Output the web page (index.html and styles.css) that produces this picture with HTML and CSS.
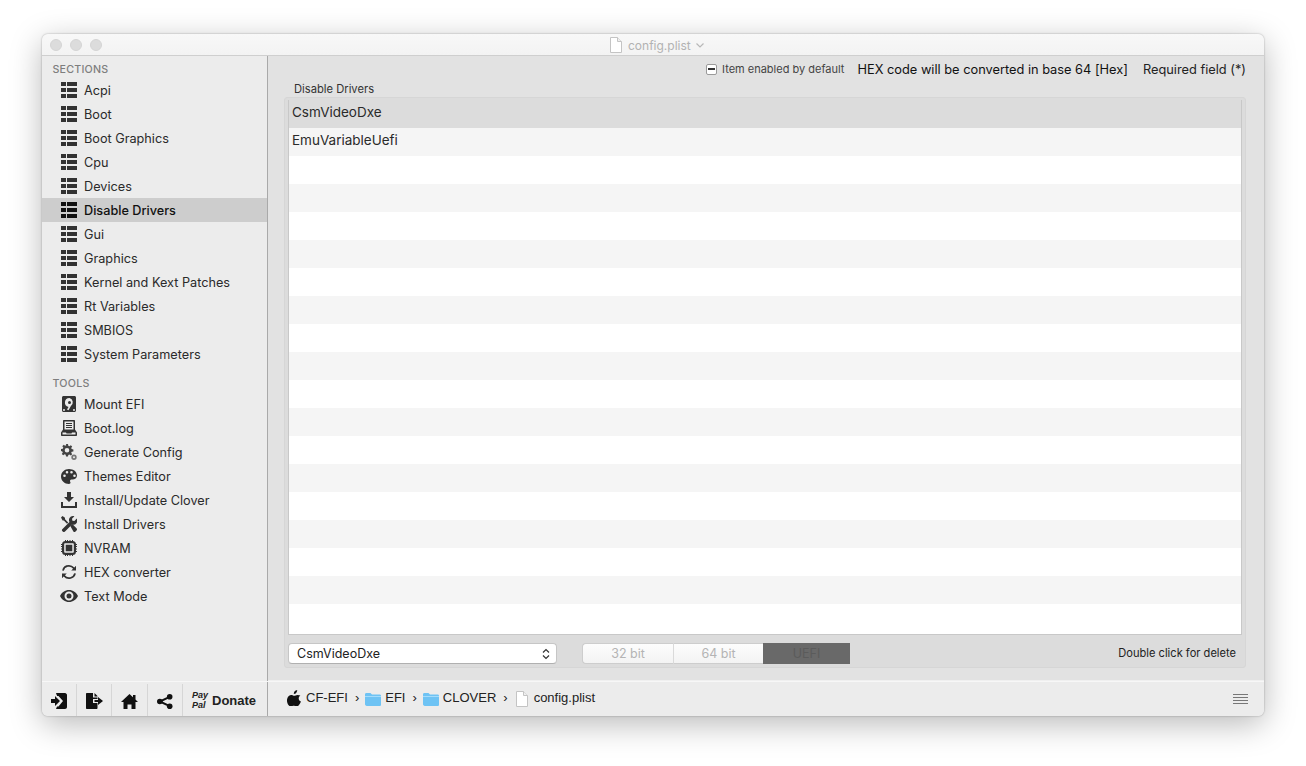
FILE: index.html
```html
<!DOCTYPE html>
<html lang="en">
<head>
<meta charset="utf-8">
<title>config.plist</title>
<link rel="stylesheet" href="styles.css">
</head>
<body>
<svg class="defs" width="0" height="0">
  <symbol id="list" viewBox="0 0 16 16">
    <path d="M0 0h5v4H0zM6 0h10v4H6zM0 6h5v4H0zM6 6h10v4H6zM0 12h5v4H0zM6 12h10v4H6z"/>
  </symbol>
  <symbol id="doc" viewBox="0 0 12 16">
    <path d="M.5.5h7l4 4v11H.5z" fill="#fff" stroke="#c4c4c4"/><path d="M7.5.5v4h4" fill="#f0f0f0" stroke="#c4c4c4"/>
  </symbol>
  <symbol id="folder" viewBox="0 0 16 14">
    <path d="M0 2.5C0 1.5.5 1 1.500 1h4l1.500 1.500h7.500c1 0 1.500.5 1.500 1.500v8.500c0 1-.5 1.500-1.500 1.500h-13C.5 13.500 0 13 0 12z" fill="#6ec3f4"/><path d="M0 4h16v1H0z" fill="#a5dcfb"/>
  </symbol>
</svg>
<div class="window">
  <header class="titlebar">
    <div class="lights"><span class="light"></span><span class="light"></span><span class="light"></span></div>
    <div class="title">
      <svg class="title-doc" width="12" height="16"><use href="#doc"/></svg>
      <span>config.plist</span>
      <svg class="title-chev" width="8" height="5" viewBox="0 0 8 5"><path d="M.5.5 4 4 7.500.5" fill="none" stroke="#b8b8b8" stroke-width="1.200"/></svg>
    </div>
  </header>
  <div class="content">
    <aside class="sidebar">
      <div class="sec-head">SECTIONS</div>
      <div class="item"><svg class="ic"><use href="#list"/></svg>Acpi</div>
      <div class="item"><svg class="ic"><use href="#list"/></svg>Boot</div>
      <div class="item"><svg class="ic"><use href="#list"/></svg>Boot Graphics</div>
      <div class="item"><svg class="ic"><use href="#list"/></svg>Cpu</div>
      <div class="item"><svg class="ic"><use href="#list"/></svg>Devices</div>
      <div class="item selected"><svg class="ic"><use href="#list"/></svg>Disable Drivers</div>
      <div class="item"><svg class="ic"><use href="#list"/></svg>Gui</div>
      <div class="item"><svg class="ic"><use href="#list"/></svg>Graphics</div>
      <div class="item"><svg class="ic"><use href="#list"/></svg>Kernel and Kext Patches</div>
      <div class="item"><svg class="ic"><use href="#list"/></svg>Rt Variables</div>
      <div class="item"><svg class="ic"><use href="#list"/></svg>SMBIOS</div>
      <div class="item"><svg class="ic"><use href="#list"/></svg>System Parameters</div>
      <div class="sec-head tools">TOOLS</div>
      <div class="item"><svg class="ic" viewBox="0 0 16 16"><path fill-rule="evenodd" d="M2.500 0h11c.8 0 1.500.7 1.500 1.500v13c0 .8-.7 1.500-1.500 1.500h-11C1.700 16 1 15.300 1 14.500v-13C1 .7 1.700 0 2.500 0zM8.500 2a4.500 4.500 0 0 0-1 8.900L6 13.500l1.500.8 2.400-4.300A4.500 4.500 0 0 0 8.500 2zm0 3a1.500 1.500 0 1 1 0 3 1.500 1.500 0 0 1 0-3zM3 13a1 1 0 1 0 0 2 1 1 0 0 0 0-2zm10 0a1 1 0 1 0 0 2 1 1 0 0 0 0-2z"/></svg>Mount EFI</div>
      <div class="item"><svg class="ic" viewBox="0 0 16 16"><path fill-rule="evenodd" d="M3 0h10c.6 0 1 .4 1 1v8.500l2 3V15c0 .6-.4 1-1 1H1c-.6 0-1-.4-1-1v-2.500l2-3V1c0-.6.4-1 1-1zm.5 1.500v8h9v-8zM5 3h6v1H5zm0 2h6v1H5zm0 2h6v1H5zM1.500 12.500v2h13v-2H11l-.5 1h-5l-.5-1z"/></svg>Boot.log</div>
      <div class="item"><svg class="ic gear" viewBox="0 0 16 16"><path fill-rule="evenodd" d="M5 0h2l.3 1.700 1.100.5L9.800 1.200l1.400 1.400-1 1.400.5 1.100 1.700.3v2l-1.700.3-.5 1.100 1 1.400-1.400 1.400-1.400-1-1.100.5L7 12.500H5l-.3-1.700-1.100-.5-1.400 1-1.400-1.400 1-1.400-.5-1.100L0 7V5l1.800-.3.5-1.100-1-1.400 1.400-1.400 1.400 1 1.100-.5zM6 4a2.300 2.300 0 1 0 0 4.600A2.300 2.300 0 0 0 6 4z"/><path fill-rule="evenodd" d="M13 10.500a2.700 2.700 0 1 1 0 5.400 2.700 2.700 0 0 1 0-5.400zm0 1.700a1 1 0 1 0 0 2 1 1 0 0 0 0-2z" fill="#777"/></svg>Generate Config</div>
      <div class="item"><svg class="ic" viewBox="0 0 16 16"><path fill-rule="evenodd" d="M8 1c4.500 0 8 2.800 8 6.500 0 2.700-2.200 4-4.500 4-1.500 0-2.500.4-2.500 1.500 0 .9.500 1.100.5 1.800 0 .7-.6 1.200-1.500 1.200C3.500 16 0 12.600 0 8.500 0 4.400 3.500 1 8 1zM3.500 6.500a1.300 1.300 0 1 0 0 2.600 1.300 1.300 0 0 0 0-2.600zM6 3a1.300 1.300 0 1 0 0 2.600A1.300 1.300 0 0 0 6 3zm4.500 0a1.300 1.300 0 1 0 0 2.600 1.300 1.300 0 0 0 0-2.600zm3 3.500a1.300 1.300 0 1 0 0 2.600 1.300 1.300 0 0 0 0-2.600z"/></svg>Themes Editor</div>
      <div class="item"><svg class="ic" viewBox="0 0 16 16"><path d="M6 0h4v5h3L8 10 3 5h3z"/><path d="M0 10h2v4h12v-4h2v6H0z"/></svg>Install/Update Clover</div>
      <div class="item"><svg class="ic" viewBox="0 0 16 16"><path d="M1.500 0 4 1.800v1.400l3.200 3.200L6 7.700 2.900 4.500H1.600L0 1.500zM12 0a3.800 3.800 0 0 1 1.400.2L11 2.700l.4 2 2 .4 2.400-2.500A4 4 0 0 1 11 8.400L4 15.500a1.600 1.600 0 0 1-2.300 0l-.2-.2a1.600 1.600 0 0 1 0-2.300l7-7A4 4 0 0 1 12 0z"/><path d="m9.300 10 2-2 4.200 4.300a1.500 1.500 0 0 1 0 2.100l-1 1a1.500 1.500 0 0 1-2.100 0z"/></svg>Install Drivers</div>
      <div class="item"><svg class="ic" viewBox="0 0 16 16"><path fill-rule="evenodd" d="M4.500 1h7A3.500 3.500 0 0 1 15 4.500v7a3.500 3.500 0 0 1-3.500 3.500h-7A3.500 3.500 0 0 1 1 11.500v-7A3.500 3.500 0 0 1 4.500 1zM4 3.200a.8.800 0 0 0-.8.800v8c0 .4.400.8.800.8h8c.4 0 .8-.4.800-.8V4a.8.800 0 0 0-.8-.8z"/><path d="M4.700 4.700h6.600v6.600H4.700zM4 0h1v1H4zm2 0h1v1H6zm2.500 0h1v1h-1zm2.500 0h1v1h-1zM4 15h1v1H4zm2 0h1v1H6zm2.500 0h1v1h-1zm2.500 0h1v1h-1zM0 4h1v1H0zm0 2h1v1H0zm0 2.500h1v1H0zM0 11h1v1H0zm15-7h1v1h-1zm0 2h1v1h-1zm0 2.500h1v1h-1zm0 2.500h1v1h-1z"/></svg>NVRAM</div>
      <div class="item"><svg class="ic" viewBox="0 0 16 16"><path d="M8 1a7 7 0 0 1 5.300 2.500L15 1.800v4.800h-4.800l1.900-1.900A5.300 5.300 0 0 0 2.800 6.800l-1.700-.4A7 7 0 0 1 8 1zM1 9.400h4.800l-1.900 1.900a5.300 5.300 0 0 0 9.300-2.100l1.700.4A7 7 0 0 1 2.700 12.500L1 14.200z"/></svg>HEX converter</div>
      <div class="item"><svg class="ic wide" viewBox="0 0 18 12" preserveAspectRatio="none"><path fill-rule="evenodd" d="M9 0c4 0 7.300 2.500 9 6-1.700 3.500-5 6-9 6S1.700 9.500 0 6c1.700-3.500 5-6 9-6zm0 1.500a4.500 4.500 0 1 0 0 9 4.500 4.500 0 0 0 0-9zm0 2a2.500 2.500 0 1 1 0 5 2.500 2.500 0 0 1 0-5z"/></svg>Text Mode</div>
    </aside>
    <main class="main">
      <div class="legend">
        <span class="legend-check"><i></i></span>
        <span class="legend-small">Item enabled by default</span>
        <span class="legend-hex">HEX code will be converted in base 64 [Hex]</span>
        <span class="legend-req">Required field (*)</span>
      </div>
      <div class="group-title">Disable Drivers</div>
      <section class="group">
        <div class="table">
          <div class="row active">CsmVideoDxe</div>
          <div class="row alt">EmuVariableUefi</div>
          <div class="row"></div><div class="row alt"></div>
          <div class="row"></div><div class="row alt"></div>
          <div class="row"></div><div class="row alt"></div>
          <div class="row"></div><div class="row alt"></div>
          <div class="row"></div><div class="row alt"></div>
          <div class="row"></div><div class="row alt"></div>
          <div class="row"></div><div class="row alt"></div>
          <div class="row"></div><div class="row alt"></div>
          <div class="row last"></div>
        </div>
        <div class="controls">
          <div class="select">CsmVideoDxe
            <svg width="8" height="12" viewBox="0 0 8 12"><path d="M1 4.500 4 1.500l3 3M1 7.500l3 3 3-3" fill="none" stroke="#333" stroke-width="1.200"/></svg>
          </div>
          <div class="segments">
            <div class="seg s1">32 bit</div>
            <div class="seg s2">64 bit</div>
            <div class="seg s3">UEFI</div>
          </div>
          <div class="hint">Double click for delete</div>
        </div>
      </section>
    </main>
  </div>
  <footer class="footer">
    <div class="actions">
      <div class="act a1"><svg width="16" height="16" viewBox="0 0 16 16"><path d="M5 0h9c1 0 2 1 2 2v12c0 1-1 2-2 2H5l1-2.500h1.500L12 8 7.500 3H6z" fill="#111"/><path d="M0 6h4V3l5 5-5 5v-3H0z" fill="#111"/><path d="M4 1.500 11 8l-7 6.500" fill="none" stroke="#ececec" stroke-width=".8"/></svg></div>
      <div class="act a2"><svg width="17" height="16" viewBox="0 0 17 16"><path d="M0 1c0-.6.4-1 1-1h6v4.500h4.500V6H7v4h4.500v5c0 .6-.4 1-1 1H1c-.6 0-1-.4-1-1z" fill="#111"/><path d="M8.500 0l3 3v.500h-3zM8.500 7H12V4l5 4-5 4V9H8.500z" fill="#111"/></svg></div>
      <div class="act a3"><svg width="17" height="15" viewBox="0 0 17 15"><path d="M8.500 0 12 3.200V1h2.500v4.500L17 8h-2.500v7H10.500v-4.500h-4V15H2.500V8H0z" fill="#111"/></svg></div>
      <div class="act a4"><svg width="16" height="15" viewBox="0 0 16 15"><circle cx="12.700" cy="2.800" r="2.800" fill="#111"/><circle cx="2.800" cy="7.500" r="2.800" fill="#111"/><circle cx="12.700" cy="12.200" r="2.800" fill="#111"/><path d="M12.700 2.800 2.800 7.500l9.900 4.700" fill="none" stroke="#111" stroke-width="2"/></svg></div>
      <div class="donate">
        <span class="paypal"><span>Pay</span><span>Pal</span></span>
        <span class="donate-text">Donate</span>
      </div>
    </div>
    <div class="path">
      <svg class="apple" width="14" height="16" viewBox="0 0 14 16"><path d="M10.200 0c.1 1-.3 2-.9 2.700-.6.800-1.600 1.300-2.500 1.200-.1-1 .4-2 .9-2.600C8.300.6 9.400.1 10.200 0zM13.400 5.500c-1 .7-1.700 1.600-1.700 2.900 0 1.500 1 2.500 2.200 3-.3 1-.8 2-1.400 2.900-.8 1.100-1.600 2.200-2.800 2.200s-1.600-.7-3-.7-1.900.7-3 .7-2-1.200-2.800-2.300C.1 12.800-.4 10.500.3 8.400.9 6.500 2.500 5 4.300 5c1.200 0 2.200.8 3 .8s1.800-.9 3.200-.9c1.100 0 2.200.3 2.900.6z" fill="#111"/></svg>
      <span class="crumb">CF-EFI</span><span class="sep">›</span>
      <svg class="folder" width="16" height="14"><use href="#folder"/></svg>
      <span class="crumb">EFI</span><span class="sep">›</span>
      <svg class="folder" width="16" height="14"><use href="#folder"/></svg>
      <span class="crumb">CLOVER</span><span class="sep sep-end">›</span>
      <svg class="file" width="12" height="16"><use href="#doc"/></svg>
      <span class="crumb">config.plist</span>
      <div class="menu"><i></i><i></i><i></i><i></i></div>
    </div>
  </footer>
</div>
</body>
</html>
```
FILE: styles.css
```css
* { box-sizing: border-box; }
html, body { margin: 0; height: 100%; background: #fff; overflow: hidden; }
body { padding: 34px 42px 50px; font-family: Inter, "Noto Sans", sans-serif; color: #2a2a2a; }
.defs { position: absolute; }

.window {
  width: 1222px; height: 682px; display: flex; flex-direction: column;
  border-radius: 6px; overflow: hidden; background: #ececec;
  box-shadow: 0 8px 32px rgba(0,0,0,.28), 0 0 2px rgba(0,0,0,.35);
}

.titlebar {
  height: 22px; flex: none; display: flex; align-items: center; position: relative;
  background: linear-gradient(#f8f8f8, #f3f3f3); border-bottom: 1px solid #cfcfcf;
}
.lights { display: flex; gap: 8px; padding-left: 8px; }
.light { width: 12px; height: 12px; border-radius: 50%; background: #dcdcdc; border: 1px solid #d4d4d4; }
.title {
  position: absolute; left: 568px; top: 3px; display: flex; align-items: center; gap: 6px;
  font-size: 12px; color: #b2b2b2; height: 16px;
}
.title-chev { margin-left: -1px; margin-top: 1px; }

.content { flex: 1; display: flex; min-height: 0; }

.sidebar {
  width: 226px; flex: none; background: #ececec; border-right: 1px solid #a9a9a9;
  padding-top: 6px; font-size: 12.700px;
}
.sec-head { height: 16px; line-height: 16px; padding-left: 10.500px; font-size: 10.700px; letter-spacing: .2px; color: #7e7e7e; font-weight: 500; }
.sec-head.tools { margin-top: 10px; }
.item { height: 24px; display: flex; align-items: center; padding-left: 19px; gap: 7px; white-space: nowrap; }
.ic { width: 16px; height: 16px; fill: #333; flex: none; }
.ic.gear { fill: #444; }
.ic.wide { width: 18px; height: 12px; margin: 0 -1px; }
.item.selected { background: #cdcdcd; color: #111; font-weight: 500; }
.item.selected .ic { fill: #111; }

.main { flex: 1; background: #e2e2e2; padding: 0 18px 0 16px; min-width: 0; border-bottom: 1px solid #f0f0f0; }
.legend { height: 26px; display: flex; align-items: center; justify-content: flex-end; white-space: nowrap; }
.legend-check { width: 11px; height: 11px; border: 1px solid #9a9a9a; border-radius: 2px; background: #fff; display: flex; align-items: center; justify-content: center; margin-right: 5px; }
.legend-check i { width: 7px; height: 2px; background: #333; }
.legend-small { font-size: 11px; color: #444; margin-right: 13px; }
.legend-hex { font-size: 12.800px; color: #111; margin-right: 15px; }
.legend-req { font-size: 12.800px; color: #222; }
.group-title { height: 15px; line-height: 15px; font-size: 11.200px; color: #333; padding-left: 10px; }
.group {
  height: 571px; background: #dcdcdc; border-radius: 3px; border: 1px solid #d6d6d6; padding: 2px 3px 0;
}
.table { height: 535px; border: 1px solid #c8c8c8; border-top: 0; background: #fff; }
.row { height: 28px; line-height: 25px; padding-left: 3px; font-size: 13.500px; background: #fff; color: #2a2a2a; }
.row.alt { background: #f5f5f5; }
.row.active { background: #dcdcdc; }
.row.last { height: 30px; }
.controls { height: 33px; display: flex; align-items: flex-start; padding-top: 8px; }
.select {
  width: 269px; height: 21px; background: #fff; border-radius: 4px; border: 1px solid #c6c6c6; border-bottom-color: #b0b0b0;
  display: flex; align-items: center; justify-content: space-between; padding: 0 6px 0 8px; font-size: 12.500px; color: #222;
}
.segments { display: flex; margin-left: 25px; height: 21px; }
.seg { display: flex; align-items: center; justify-content: center; font-size: 12.500px; }
.s1, .s2 { background: linear-gradient(#fdfdfd, #f3f3f3); color: #b4b4b4; border: 1px solid #cdcdcd; }
.s1 { width: 92px; border-radius: 4px 0 0 4px; border-right: 1px solid #dadada; }
.s2 { width: 89px; border-left: 0; border-right: 0; }
.s3 { width: 87px; background: #696969; color: #5b5b5b; }
.hint { margin-left: auto; padding-right: 6px; font-size: 11.100px; color: #222; line-height: 20px; }

.footer { height: 35px; flex: none; display: flex; background: #ececec; border-top: 1px solid #f7f7f7; }
.actions { width: 226px; flex: none; display: flex; align-items: center; border-right: 1px solid #a9a9a9; padding-top: 2px; }
.act { height: 32px; display: flex; align-items: center; justify-content: center; border-right: 1px solid #d6d6d6; flex: none; padding-top: 2px; }
.a1 { width: 35px; padding-right: 1px; }
.a2 { width: 35px; }
.a3 { width: 36px; }
.a4 { width: 35px; }
.donate { display: flex; align-items: center; padding-left: 9px; gap: 4px; }
.paypal { display: flex; flex-direction: column; font-family: "Liberation Sans", sans-serif; font-size: 9px; line-height: 9px; font-weight: 700; font-style: italic; color: #222; margin-top: 1px; }
.paypal span:last-child { margin-top: 1px; }
.donate-text { font-family: "Liberation Sans", sans-serif; font-size: 13px; font-weight: 700; color: #222; margin-top: 1px; }

.path { flex: 1; display: flex; align-items: center; padding-left: 19px; padding-bottom: 3px; font-family: "Liberation Sans", sans-serif; font-size: 13px; color: #222; }
.apple { margin-right: 5px; margin-top: 1px; }
.crumb { white-space: nowrap; }
.sep { margin: 0 6px 0 7px; font-size: 13px; }
.sep-end { margin-right: 8px; }
.folder { margin-right: 4px; margin-top: 2px; }
.file { margin-right: 6px; margin-top: 2px; }
.menu { margin-left: auto; margin-right: 16px; margin-top: 3px; display: flex; flex-direction: column; gap: 2px; width: 15px; }
.menu i { display: block; height: 1px; background: #777; }
```
